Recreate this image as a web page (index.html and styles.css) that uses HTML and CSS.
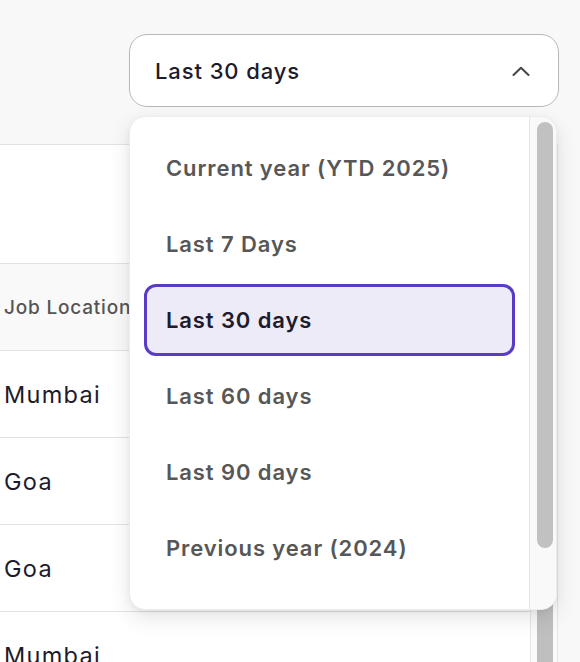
FILE: index.html
```html
<!DOCTYPE html>
<html lang="en">
<head>
<meta charset="utf-8">
<title>Date range dropdown</title>
<link rel="stylesheet" href="styles.css">
</head>
<body>
<div class="page">
  <div class="top">
    <button class="trigger">
      <span class="trigger-label">Last 30 days</span>
      <svg class="chevron" width="18" height="10" viewBox="0 0 18 10"><path d="M1.5 9 L9 1.8 L16.5 9" fill="none" stroke="#454545" stroke-width="2" stroke-linecap="round" stroke-linejoin="round"/></svg>
    </button>
  </div>
  <div class="table-area">
    <div class="table">
      <div class="toolbar"></div>
      <div class="row head"><span class="head-cell">Job Location</span></div>
      <div class="row"><span class="cell">Mumbai</span></div>
      <div class="row"><span class="cell">Goa</span></div>
      <div class="row"><span class="cell">Goa</span></div>
      <div class="row"><span class="cell">Mumbai</span></div>
    </div>
    <div class="track"><div class="thumb"></div></div>
    <div class="rest"></div>
  </div>

  <div class="menu">
    <ul class="options">
      <li class="option">Current year (YTD 2025)</li>
      <li class="option">Last 7 Days</li>
      <li class="option selected">Last 30 days</li>
      <li class="option">Last 60 days</li>
      <li class="option">Last 90 days</li>
      <li class="option">Previous year (2024)</li>
    </ul>
    <div class="menu-track"><div class="menu-thumb"></div></div>
  </div>
</div>
</body>
</html>
```
FILE: styles.css
```css
* { box-sizing: border-box; }
html, body { margin: 0; padding: 0; }
body {
  background: #f8f8f8;
  font-family: Inter, "Noto Sans", sans-serif;
  color: #1d1b2c;
  width: 580px;
  height: 662px;
  overflow: hidden;
}
.page { position: relative; width: 580px; height: 662px; overflow: hidden; }

.top {
  height: 144px;
  padding: 34px 0 0 129px;
}
.trigger {
  width: 430px;
  height: 73px;
  display: flex;
  align-items: center;
  justify-content: space-between;
  padding: 0 28px 0 25px;
  background: #ffffff;
  border: 1px solid #b8b8b8;
  border-radius: 18px;
  font: inherit;
  cursor: pointer;
}
.trigger-label {
  font-size: 22px;
  font-weight: 500;
  letter-spacing: 0.9px;
  color: #1d1b2c;
}
.chevron { display: block; }

.table-area {
  display: flex;
  height: 518px;
}
.table {
  width: 530px;
  background: #ffffff;
  border-top: 1px solid #e2e2e2;
}
.toolbar { height: 119px; border-bottom: 1px solid #e2e2e2; }
.row {
  height: 87px;
  display: flex;
  align-items: center;
  padding-left: 4px;
  border-bottom: 1px solid #e2e2e2;
}
.row.head { background: #f9f9f9; }
.head-cell { font-size: 19px; font-weight: 500; letter-spacing: 0.8px; color: #555555; white-space: nowrap; }
.cell { font-size: 23.5px; font-weight: 400; letter-spacing: 1.3px; color: #1d1b2c; }

.track {
  width: 28px;
  background: #fafafa;
  border-left: 1px solid #e6e6e6;
  border-right: 1px solid #e6e6e6;
  padding: 10px 0 0 6px;
}
.thumb {
  width: 16px;
  height: 600px;
  border-radius: 8px;
  background: #bfbfbf;
}
.rest { flex: 1; background: #f8f8f8; }

.menu {
  position: absolute;
  left: 129px;
  top: 116px;
  width: 428px;
  height: 494px;
  display: flex;
  background: #ffffff;
  border: 1px solid #ececec;
  border-radius: 16px;
  overflow: hidden;
  box-shadow: 0 8px 22px rgba(0, 0, 0, 0.10), 0 2px 6px rgba(0, 0, 0, 0.05);
}
.options {
  list-style: none;
  margin: 0;
  padding: 13px 14px 0 14px;
  flex: 1;
}
.option {
  height: 72px;
  margin: 2px 0 4px 0;
  display: flex;
  align-items: center;
  padding-left: 19px;
  border: 3px solid transparent;
  border-radius: 12px;
  font-size: 22px;
  font-weight: 600;
  letter-spacing: 0.9px;
  color: #575757;
  white-space: nowrap;
}
.option.selected {
  background: #ecebf7;
  border-color: #5a3bc6;
  color: #1d1b2c;
}
.menu-track {
  width: 27px;
  background: #f9f9f9;
  border-left: 1px solid #e6e6e6;
  padding: 5px 0 0 7px;
}
.menu-thumb {
  width: 16px;
  height: 426px;
  border-radius: 8px;
  background: #c1c1c1;
}
```
